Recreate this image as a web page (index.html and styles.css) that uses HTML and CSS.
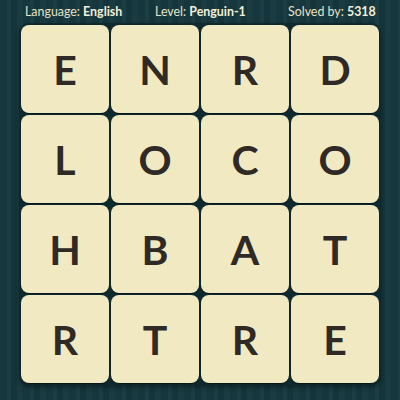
FILE: index.html
```html
<!DOCTYPE html>
<html>
<head>
<meta charset="utf-8">
<link rel="stylesheet" href="styles.css">
</head>
<body>
<div class="page">
  <div class="header">
    <span class="item lang">Language: <b>English</b></span>
    <span class="item level">Level: <b>Penguin-1</b></span>
    <span class="item solved">Solved by: <b>5318</b></span>
  </div>
  <div class="board">
    <div class="tile">E</div><div class="tile">N</div><div class="tile">R</div><div class="tile">D</div>
    <div class="tile">L</div><div class="tile">O</div><div class="tile">C</div><div class="tile">O</div>
    <div class="tile">H</div><div class="tile">B</div><div class="tile">A</div><div class="tile">T</div>
    <div class="tile">R</div><div class="tile">T</div><div class="tile">R</div><div class="tile">E</div>
  </div>
</div>
</body>
</html>
```

FILE: styles.css
```css
html, body {
  margin: 0;
  padding: 0;
}
body {
  width: 400px;
  height: 400px;
  overflow: hidden;
  background-color: #17393f;
  background-image: repeating-linear-gradient(90deg,
    #16373d 0px, #16373d 7px,
    #1a3e44 7px, #1a3e44 11px,
    #15353b 11px, #15353b 17px,
    #193b41 17px, #193b41 23px);
  font-family: Lato, "Open Sans", sans-serif;
}
.page {
  display: flex;
  flex-direction: column;
}
.header {
  height: 23px;
  display: flex;
  align-items: center;
  color: #e8e2c6;
  font-size: 12.4px;
  padding-left: 25px;
}
.header b {
  font-weight: 700;
  color: #f4efd8;
}
.lang { width: 130px; }
.level { width: 133px; }
.board {
  margin-left: 19px;
  width: 362px;
  padding: 2px;
  box-sizing: border-box;
  background: #0f2a2f;
  border-radius: 10px;
  display: grid;
  grid-template-columns: repeat(4, 88px);
  grid-template-rows: repeat(4, 88px);
  gap: 2px;
  box-shadow: 0 2px 4px rgba(0,0,0,0.4);
}
.tile {
  background: #f1e9c1;
  border-radius: 8px;
  display: flex;
  align-items: center;
  justify-content: center;
  font-size: 41px;
  font-weight: 700;
  color: #2f2a25;
  box-shadow: 0 1px 1px rgba(0,0,0,0.5);
}
```
